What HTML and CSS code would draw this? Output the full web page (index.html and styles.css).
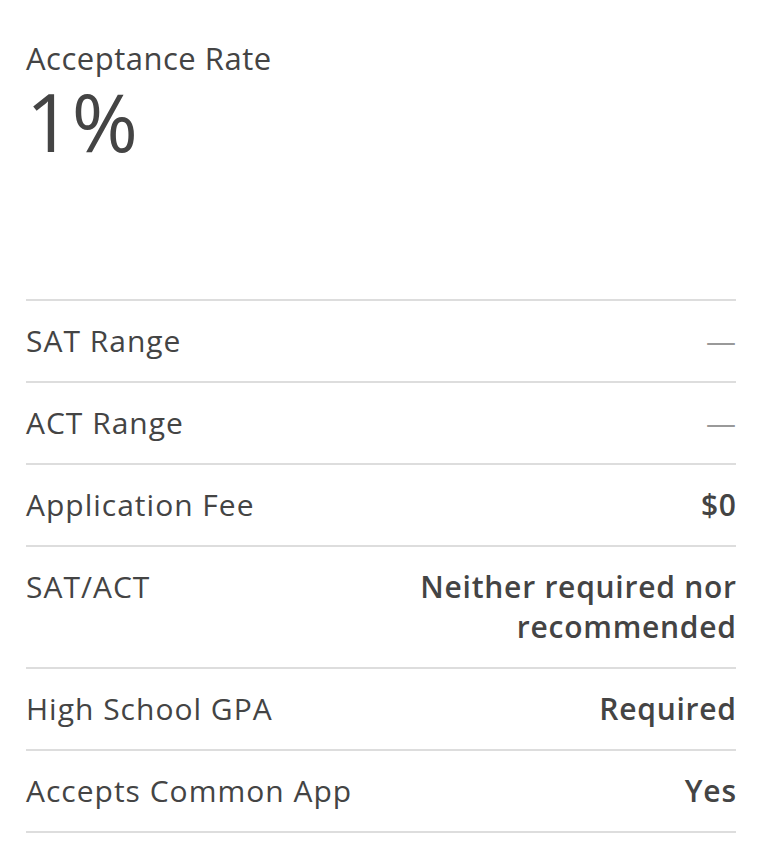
FILE: index.html
```html
<!DOCTYPE html>
<html>
<head>
<meta charset="utf-8">
<link rel="stylesheet" href="styles.css">
</head>
<body>
<div class="card">
  <div class="hero">
    <div class="hero-label">Acceptance Rate</div>
    <div class="hero-value">1%</div>
  </div>
  <div class="rows">
    <div class="row"><div class="label">SAT Range</div><div class="value dash">—</div></div>
    <div class="row"><div class="label">ACT Range</div><div class="value dash">—</div></div>
    <div class="row"><div class="label">Application Fee</div><div class="value">$0</div></div>
    <div class="row"><div class="label">SAT/ACT</div><div class="value">Neither required nor<br>recommended</div></div>
    <div class="row"><div class="label">High School GPA</div><div class="value">Required</div></div>
    <div class="row"><div class="label">Accepts Common App</div><div class="value">Yes</div></div>
  </div>
</div>
</body>
</html>
```

FILE: styles.css
```css
html, body {
  margin: 0;
  padding: 0;
  background: #fff;
}
body {
  font-family: "Open Sans", "Lato", sans-serif;
  color: #444;
}
.card {
  margin-left: 26px;
  width: 710px;
}
.hero {
  height: 299px;
  padding-top: 40px;
  box-sizing: border-box;
}
.hero-label {
  font-size: 31px;
  line-height: 36px;
  letter-spacing: 0.5px;
}
.hero-value {
  margin-top: 5px;
  font-size: 80px;
  line-height: 80px;
}
.rows {
  border-top: 2px solid #ddd;
}
.row {
  display: flex;
  justify-content: space-between;
  align-items: flex-start;
  padding: 20px 0;
  border-bottom: 2px solid #ddd;
  font-size: 30px;
  line-height: 40px;
  letter-spacing: 1px;
}
.value {
  font-weight: 600;
  text-align: right;
  letter-spacing: 0.75px;
  margin-right: -0.75px;
}
.value.dash {
  font-weight: 400;
  color: #999;
}
```
